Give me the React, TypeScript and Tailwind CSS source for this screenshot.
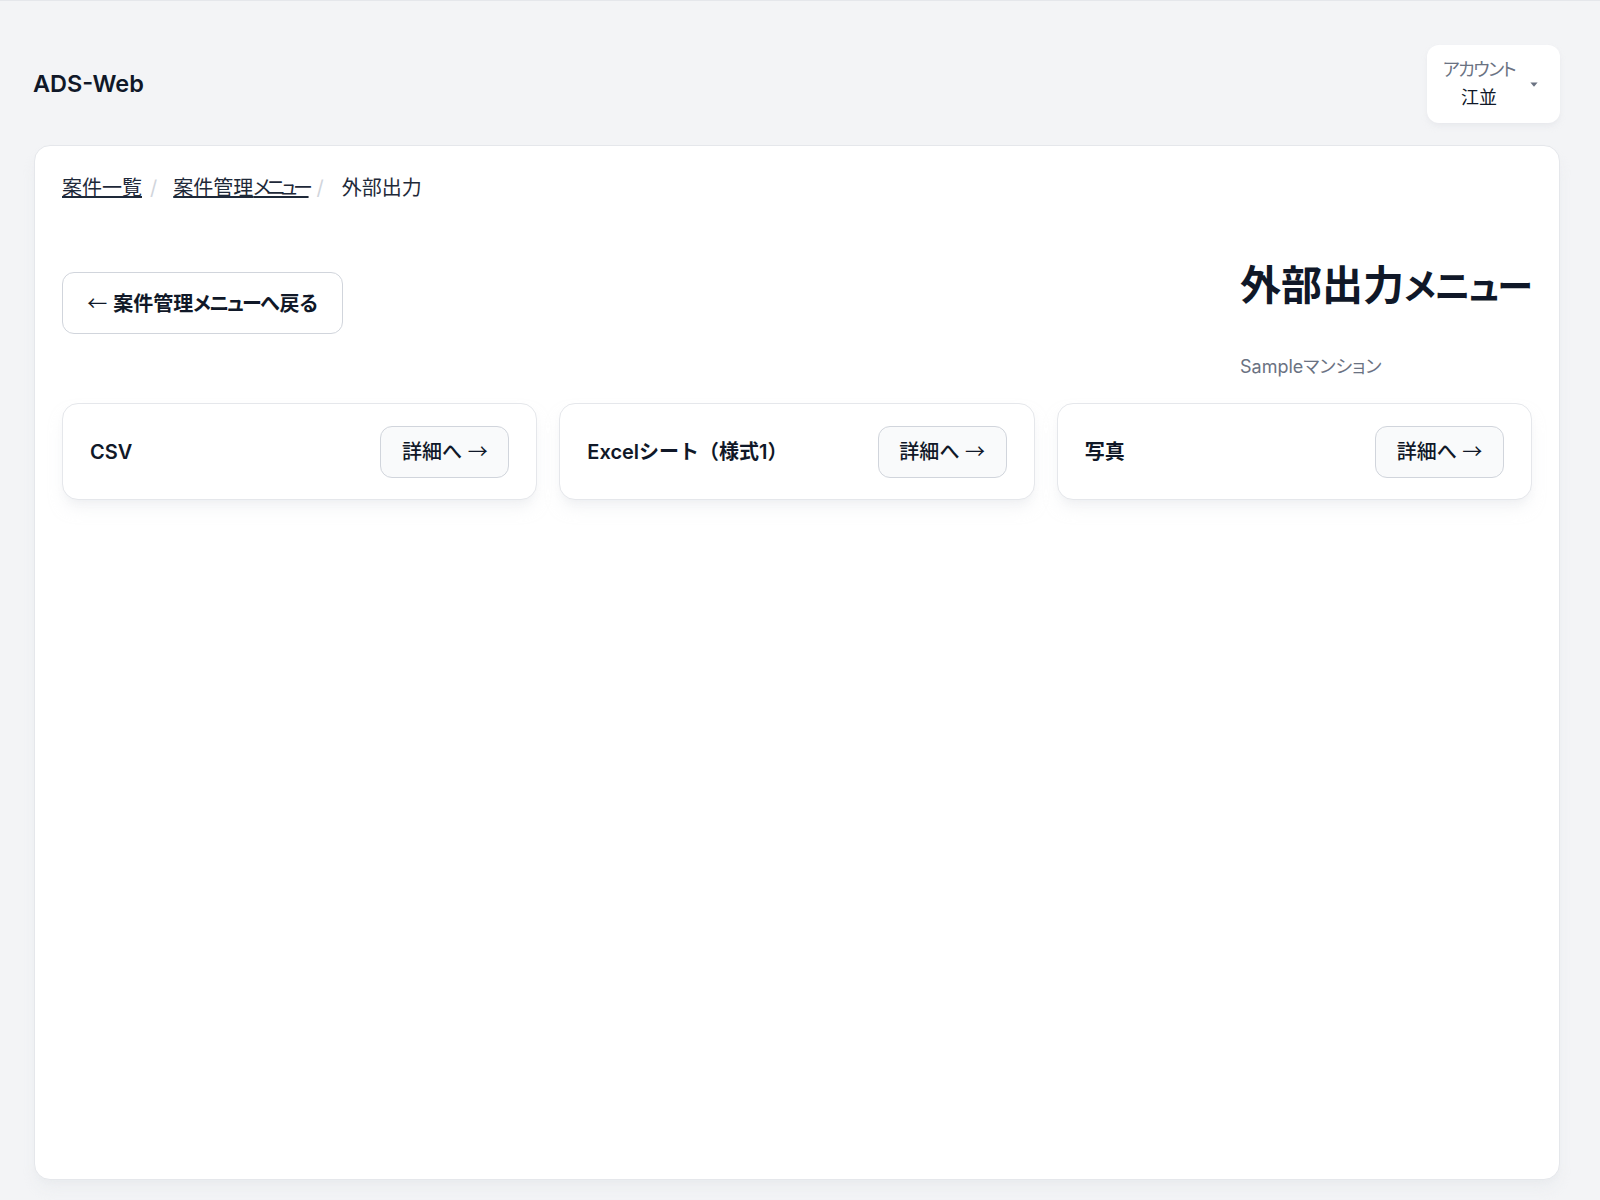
const outputs = ["CSV", "Excelシート（様式1）", "写真"];

function Arrow({ children }: { children: string }) {
  return <span className="font-['Noto_Sans_CJK_JP'] font-normal">{children}</span>;
}

function OutputCard({ label }: { label: string }) {
  return (
    <div className="flex h-[97px] items-center justify-between rounded-2xl border border-gray-200 bg-white px-[27px] shadow-lg shadow-gray-200/50">
      <span className="whitespace-nowrap text-[20px] font-semibold text-gray-900 [font-feature-settings:normal]">{label}</span>
      <button className="h-[52px] w-[129px] whitespace-nowrap rounded-xl border border-gray-300 bg-gray-50 text-[20px] font-medium text-gray-900">
        詳細へ <Arrow>→</Arrow>
      </button>
    </div>
  );
}

export default function App() {
  return (
    <div className="min-h-[1200px] border-t border-gray-200 bg-[#f3f4f6] font-['Inter','Noto_Sans_CJK_JP',sans-serif] text-gray-900 [font-feature-settings:'palt']">
      <header className="flex items-center justify-between pl-[33px] pr-[40px] pt-[44px]">
        <div className="text-[23.5px] font-semibold">ADS-Web</div>
        <button className="flex h-[78px] w-[133px] items-center justify-between rounded-xl bg-white pl-4 pr-[22px] shadow-md shadow-gray-200/70">
          <div className="whitespace-nowrap text-center text-[18px] leading-[28px]">
            <div className="tracking-[-1.5px] text-gray-500">アカウント</div>
            <div>江並</div>
          </div>
          <svg viewBox="0 0 8 5" className="h-[5px] w-2 fill-gray-500">
            <path d="M0.4 0.4 H7.6 L4 4.8 Z" />
          </svg>
        </button>
      </header>
      <main className="ml-[34px] mr-[40px] mt-[22px] flex h-[1035px] flex-col rounded-2xl border border-gray-200 bg-white px-[27px] pt-[26px] shadow-lg shadow-gray-200/60">
        <nav className="flex items-center text-[20px] leading-[32px] text-gray-800">
          <a className="underline">案件一覧</a>
          <span className="ml-2 mr-4 text-gray-300">/</span>
          <a className="underline">
            案件管理<span className="tracking-[-4.3px]">メニュー</span>
          </a>
          <span className="ml-2 mr-[18px] text-gray-300">/</span>
          <span>外部出力</span>
        </nav>
        <div className="mt-[54px] flex items-start justify-between">
          <button className="mt-[14px] h-[62px] w-[281px] whitespace-nowrap rounded-xl border border-gray-300 bg-white text-[20px] font-semibold">
            <Arrow>←</Arrow>
            <span className="ml-1.5">案件管理</span>
            <span className="tracking-[-1.8px]">メニュー</span>へ戻る
          </button>
          <div className="w-[292px]">
            <h1 className="whitespace-nowrap text-[41px] font-semibold leading-[54px]">
              外部出力<span className="text-[36px] tracking-[-1.5px]">メニュー</span>
            </h1>
            <p className="mt-[39px] whitespace-nowrap text-[18px] leading-[28px] text-gray-500">Sampleマンション</p>
          </div>
        </div>
        <div className="mt-[22px] grid grid-cols-3 gap-[22px]">
          {outputs.map((o) => (
            <OutputCard key={o} label={o} />
          ))}
        </div>
      </main>
    </div>
  );
}
